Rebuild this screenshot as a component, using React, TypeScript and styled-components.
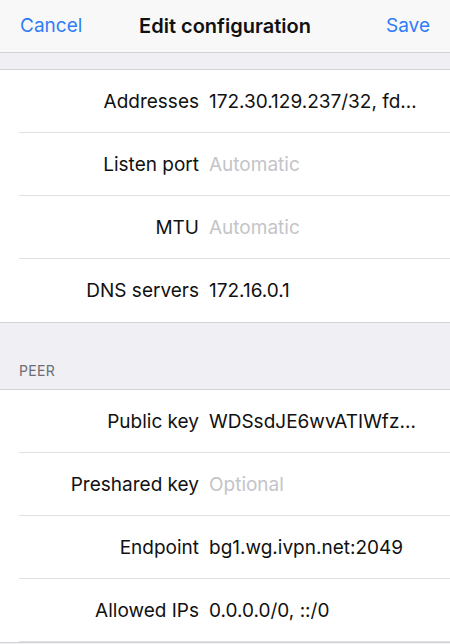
import React from "react";
import styled, { createGlobalStyle } from "styled-components";

const Global = createGlobalStyle`
  html, body { margin: 0; padding: 0; background: #efeff4; }
  body { font-family: Inter, "Noto Sans", Roboto, sans-serif; -webkit-font-smoothing: antialiased; }
  * { box-sizing: border-box; }
`;

const Screen = styled.div`
  width: 450px;
  height: 644px;
  overflow: hidden;
  background: #efeff4;
  display: flex;
  flex-direction: column;
`;

const NavBar = styled.div`
  height: 53px;
  flex: none;
  background: #f8f8f8;
  border-bottom: 1px solid #d3d3d6;
  display: grid;
  grid-template-columns: 1fr auto 1fr;
  align-items: center;
  padding: 0 20px 1px;
`;

const NavButton = styled.span<{ $align: "left" | "right" }>`
  color: #2f7cf6;
  font-size: 19px;
  justify-self: ${(p) => (p.$align === "left" ? "start" : "end")};
`;

const Title = styled.span`
  font-size: 20px;
  font-weight: 600;
  color: #111;
`;

const Spacer = styled.div<{ $h: number }>`
  height: ${(p) => p.$h}px;
  flex: none;
`;

const SectionHeader = styled.div`
  height: 66px;
  flex: none;
  display: flex;
  align-items: flex-end;
  padding: 0 19px 10px;
  font-size: 14px;
  color: #6d6d72;
  letter-spacing: 0.3px;
`;

const Group = styled.div`
  background: #fff;
  border-top: 1px solid #d3d3d6;
  border-bottom: 1px solid #d3d3d6;
  flex: none;
`;

const Row = styled.div<{ $last?: boolean }>`
  height: 63px;
  margin-left: 19px;
  display: grid;
  grid-template-columns: 180px 1fr;
  column-gap: 10px;
  align-items: center;
  border-bottom: ${(p) => (p.$last ? "none" : "1px solid #e0e0e3")};
  padding-right: 20px;
  font-size: 19px;
`;

const Label = styled.span`
  text-align: right;
  color: #111;
`;

const Value = styled.span<{ $placeholder?: boolean }>`
  color: ${(p) => (p.$placeholder ? "#c4c4c9" : "#111")};
  white-space: nowrap;
  overflow: hidden;
`;

type Field = { label: string; value: string; placeholder?: boolean };

const iface: Field[] = [
  { label: "Addresses", value: "172.30.129.237/32, fd…" },
  { label: "Listen port", value: "Automatic", placeholder: true },
  { label: "MTU", value: "Automatic", placeholder: true },
  { label: "DNS servers", value: "172.16.0.1" },
];

const peer: Field[] = [
  { label: "Public key", value: "WDSsdJE6wvATIWfz…" },
  { label: "Preshared key", value: "Optional", placeholder: true },
  { label: "Endpoint", value: "bg1.wg.ivpn.net:2049" },
  { label: "Allowed IPs", value: "0.0.0.0/0, ::/0" },
];

const FieldRows = ({ fields, closeLast }: { fields: Field[]; closeLast: boolean }) => (
  <>
    {fields.map((f, i) => (
      <Row key={f.label} $last={closeLast && i === fields.length - 1}>
        <Label>{f.label}</Label>
        <Value $placeholder={f.placeholder}>{f.value}</Value>
      </Row>
    ))}
  </>
);

export default function App() {
  return (
    <>
      <Global />
      <Screen>
        <NavBar>
          <NavButton $align="left">Cancel</NavButton>
          <Title>Edit configuration</Title>
          <NavButton $align="right">Save</NavButton>
        </NavBar>
        <Spacer $h={16} />
        <Group>
          <FieldRows fields={iface} closeLast />
        </Group>
        <SectionHeader>PEER</SectionHeader>
        <Group>
          <FieldRows fields={peer} closeLast={false} />
        </Group>
      </Screen>
    </>
  );
}
